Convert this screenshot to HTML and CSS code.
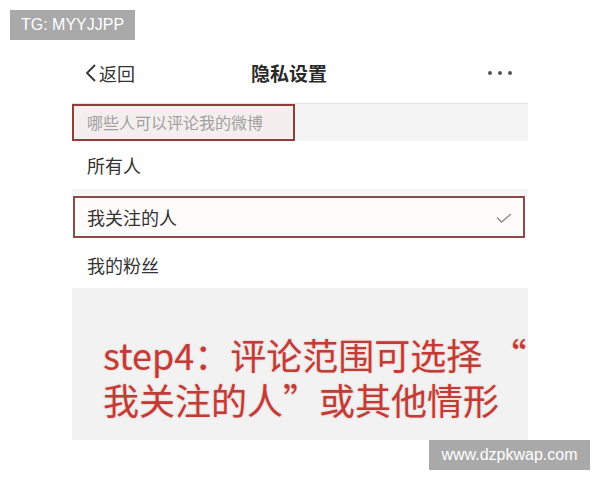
FILE: index.html
```html
<!DOCTYPE html>
<html lang="zh">
<head>
<meta charset="utf-8">
<link rel="stylesheet" href="styles.css">
</head>
<body>
<div class="tag-top">TG: MYYJJPP</div>
<div class="shot">
  <div class="header">
    <div class="back">
      <svg class="chev" width="12" height="20" viewBox="0 0 12 20"><path d="M10 2 L2 10 L10 18" fill="none" stroke="#333" stroke-width="1.8"/></svg>
      <span>返回</span>
    </div>
    <div class="title">隐私设置</div>
    <div class="more"><i></i><i></i><i></i></div>
  </div>
  <div class="section">
    <div class="section-box">哪些人可以评论我的微博</div>
  </div>
  <div class="row">所有人</div>
  <div class="sep"></div>
  <div class="row selected">
    <span>我关注的人</span>
    <svg class="check" width="16" height="10" viewBox="0 0 16 10"><path d="M1 4.5 L5.5 9 L15 1" fill="none" stroke="#8a8a8a" stroke-width="1.3"/></svg>
  </div>
  <div class="row last">我的粉丝</div>
  <div class="panel">
    <div class="caption">
      <div class="line">step4：评论范围可选择 “</div>
      <div class="line">我关注的人”或其他情形</div>
    </div>
  </div>
</div>
<div class="tag-bottom">www.dzpkwap.com</div>
</body>
</html>
```
FILE: styles.css
```css
html, body {
  margin: 0;
  padding: 0;
  background: #ffffff;
}
body {
  width: 600px;
  height: 480px;
  position: relative;
  font-family: "Noto Sans CJK SC", "Noto Sans", sans-serif;
  overflow: hidden;
}
.tag-top {
  position: absolute;
  left: 10px;
  top: 10px;
  width: 125px;
  height: 30px;
  background: #a9a9a9;
  color: #fff;
  font-family: "Liberation Sans", Arial, sans-serif;
  font-size: 16px;
  line-height: 30px;
  text-align: center;
}
.tag-bottom {
  position: absolute;
  left: 429px;
  top: 440px;
  width: 161px;
  height: 30px;
  background: #a9a9a9;
  color: #fff;
  font-family: "Liberation Sans", Arial, sans-serif;
  font-size: 16px;
  line-height: 30px;
  text-align: center;
}
.shot {
  margin: 40px 0 0 72px;
  width: 456px;
  display: flex;
  flex-direction: column;
}
.header {
  height: 63px;
  border-bottom: 1px solid #e2e2e2;
  display: flex;
  align-items: center;
  position: relative;
  background: #fff;
}
.back {
  display: flex;
  align-items: center;
  margin-left: 13px;
  font-size: 18px;
  color: #333;
  gap: 2px;
  padding-top: 2px;
}
.chev { display: block; }
.title {
  position: absolute;
  left: 179px;
  top: 0;
  height: 63px;
  line-height: 63px;
  font-size: 19px;
  font-weight: bold;
  color: #2a2a2a;
  padding-top: 1px;
}
.more {
  margin-left: auto;
  margin-right: 16px;
  display: flex;
  gap: 6px;
  padding-top: 3px;
}
.more i {
  width: 4px;
  height: 4px;
  border-radius: 50%;
  background: #555;
  display: block;
}
.section {
  height: 37px;
  background: #f3f3f3;
  display: flex;
}
.section-box {
  height: 33px;
  border: 2px solid #8d3f3c;
  background: #f4efee;
  color: #a0a0a0;
  font-size: 16px;
  line-height: 33px;
  padding-left: 13px;
  box-sizing: content-box;
  width: 206px;
}
.row {
  height: 48px;
  display: flex;
  align-items: center;
  padding-left: 15px;
  font-size: 18px;
  color: #333;
  background: #fff;
}
.sep {
  height: 7px;
  background: #f6f6f6;
}
.row.selected {
  height: 38px;
  margin-left: 1px;
  margin-right: 3px;
  border: 2px solid #8d4a48;
  background: #fffbfb;
  padding-left: 12px;
  padding-right: 11px;
  justify-content: space-between;
}
.check { display: block; margin-top: 2px; }
.row.last {
  height: 50px;
  padding-top: 4px;
  box-sizing: border-box;
}
.panel {
  height: 152px;
  background: #f2f2f2;
  display: flex;
  align-items: flex-start;
}
.caption {
  margin: 44px 0 0 31px;
  font-size: 36px;
  color: #c23b36;
  text-shadow: 0 0 2px rgba(230, 120, 110, 0.5);
  white-space: nowrap;
  display: flex;
  flex-direction: column;
}
.caption .line {
  height: 45px;
  line-height: 45px;
}
```
